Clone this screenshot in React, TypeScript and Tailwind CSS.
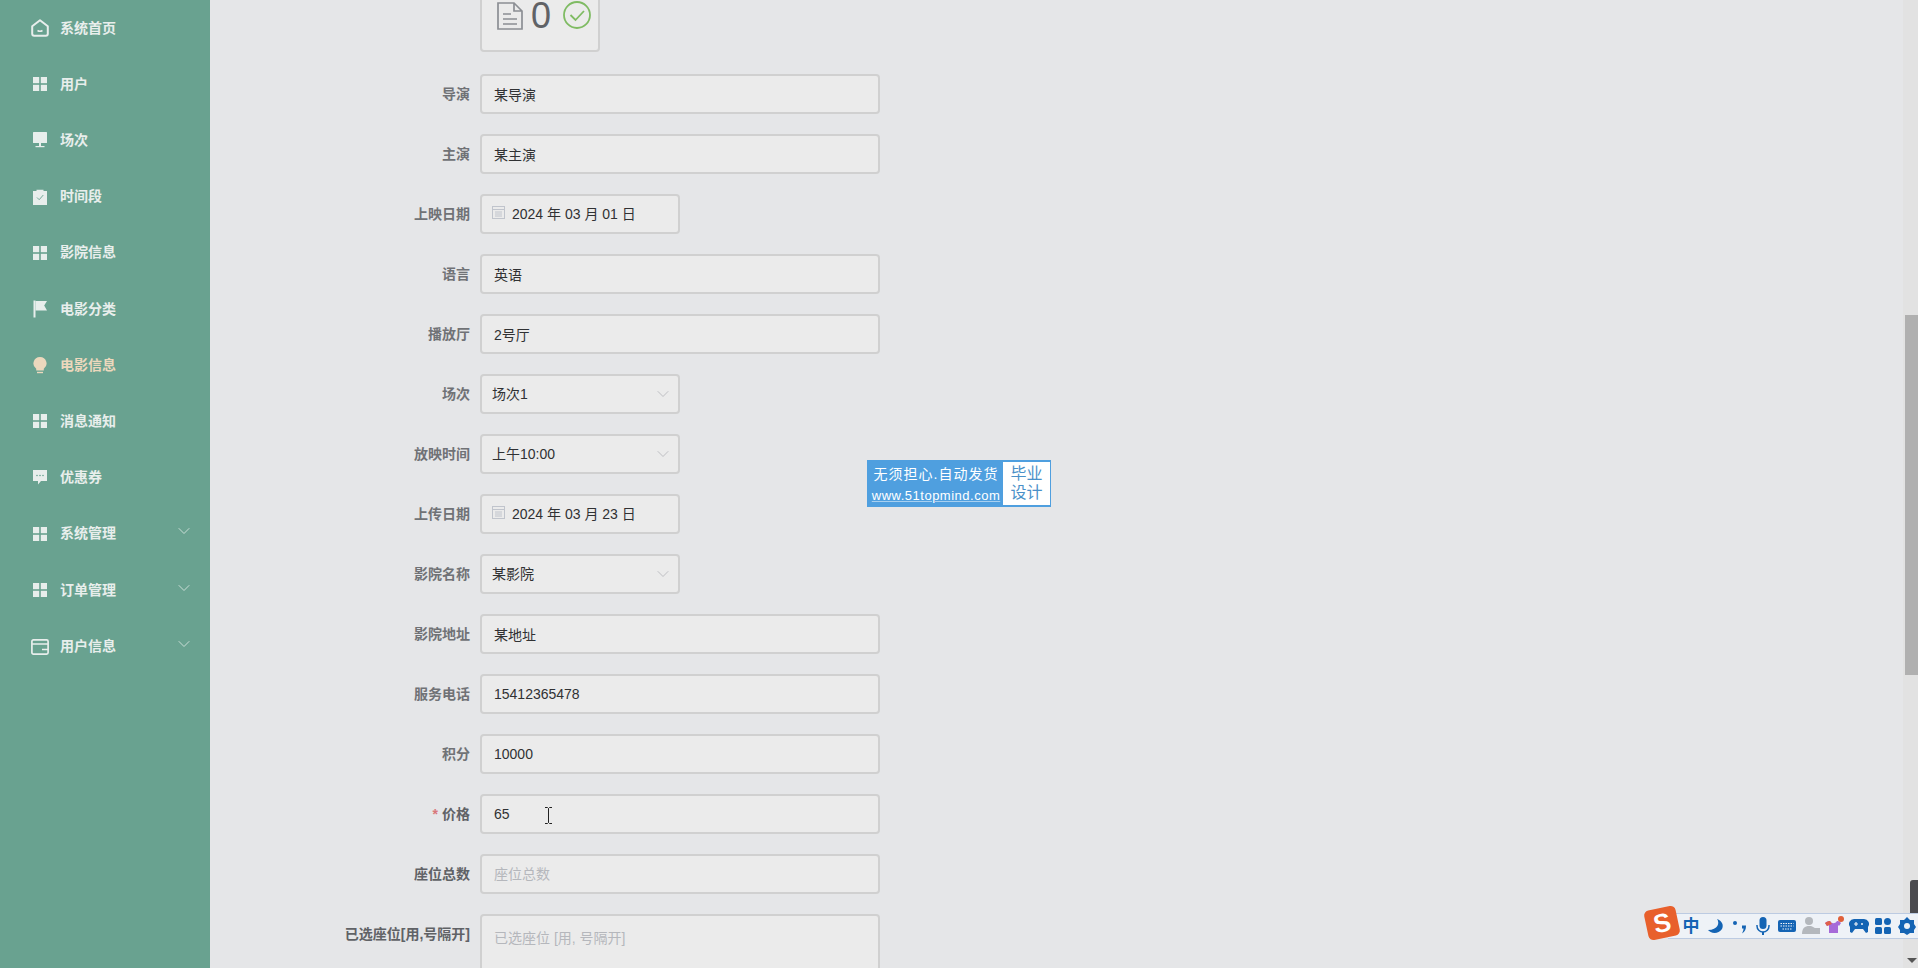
import type { ReactNode } from "react";
import { ChevronDown } from "lucide-react";

const Grid = () => (
  <svg width="14" height="14" viewBox="0 0 14 14" fill="currentColor">
    <rect x="0" y="0" width="6.2" height="6.2" />
    <rect x="7.8" y="0" width="6.2" height="6.2" />
    <rect x="0" y="7.8" width="6.2" height="6.2" />
    <rect x="7.8" y="7.8" width="6.2" height="6.2" />
  </svg>
);

const Home = () => (
  <svg width="18" height="18" viewBox="0 0 18 18" fill="none" stroke="currentColor" strokeWidth="2">
    <path d="M1.2 7.200 9 1.200l7.800 6v7.600a2 2 0 0 1-2 2H3.200a2 2 0 0 1-2-2z" strokeLinejoin="round" />
    <path d="M6.500 11.500q2.500 1.500 5 0" strokeWidth="1.500" />
  </svg>
);

const Monitor = () => (
  <svg width="14" height="16" viewBox="0 0 14 16" fill="currentColor">
    <rect x="0" y="0" width="14" height="11" rx="0.5" />
    <rect x="6" y="11" width="2" height="3" />
    <rect x="2.5" y="14" width="9" height="1.2" />
  </svg>
);

const Clip = () => (
  <svg width="14" height="16" viewBox="0 0 14 16">
    <path fill="currentColor" d="M0 2h3.5V.8h7V2H14v14H0z" />
    <path fill="none" stroke="#69a290" strokeWidth="0.9" d="m4 8.5 2.2 2.2L10.3 6" />
  </svg>
);

const Flag = () => (
  <svg width="14" height="18" viewBox="0 0 14 18" fill="currentColor">
    <rect x="0.5" y="0.5" width="2" height="17" />
    <path d="M2.5 1H14l-2.8 4.5L14 10.500H2.500z" />
  </svg>
);

const Bulb = () => (
  <svg width="14" height="17" viewBox="0 0 14 17" fill="currentColor">
    <path d="M7 0a6.500 6.500 0 0 1 3.800 11.800V13.500H3.200v-1.700A6.500 6.500 0 0 1 7 0z" />
    <rect x="4" y="14.800" width="6" height="1.400" />
  </svg>
);

const Chat = () => (
  <svg width="14" height="15" viewBox="0 0 14 15">
    <path fill="currentColor" d="M0 0h14v11H8l-3 3.500V11H0z" />
    <circle cx="4" cy="5.500" r="0.800" fill="#69a290" />
    <circle cx="7" cy="5.500" r="0.800" fill="#69a290" />
    <circle cx="10" cy="5.500" r="0.800" fill="#69a290" />
  </svg>
);

const Card = () => (
  <svg width="18" height="16" viewBox="0 0 18 16" fill="none" stroke="currentColor" strokeWidth="1.700">
    <rect x="0.900" y="0.900" width="16.200" height="14.200" rx="1.500" />
    <path d="M1 5h16M11 10.500h6" />
  </svg>
);

const menu: { label: string; icon: ReactNode; active?: boolean; arrow?: boolean }[] = [
  { label: "系统首页", icon: <Home /> },
  { label: "用户", icon: <Grid /> },
  { label: "场次", icon: <Monitor /> },
  { label: "时间段", icon: <Clip /> },
  { label: "影院信息", icon: <Grid /> },
  { label: "电影分类", icon: <Flag /> },
  { label: "电影信息", icon: <Bulb />, active: true },
  { label: "消息通知", icon: <Grid /> },
  { label: "优惠券", icon: <Chat /> },
  { label: "系统管理", icon: <Grid />, arrow: true },
  { label: "订单管理", icon: <Grid />, arrow: true },
  { label: "用户信息", icon: <Card />, arrow: true },
];

const CalendarIcon = () => (
  <svg width="13" height="13" viewBox="0 0 13 13" fill="none" stroke="#c0c4cc" strokeWidth="1">
    <rect x="0.500" y="0.500" width="12" height="12" />
    <path d="M0.500 3.500h12M3 6h7M3 8h7M3 10h7" />
  </svg>
);

function Row({ label, required, strong, tall, children }: { label: string; required?: boolean; strong?: boolean; tall?: boolean; children: ReactNode }) {
  return (
    <div className="flex mb-5">
      <label
        className={`w-[270px] pr-[10px] text-right text-[14px] font-bold leading-[40px] ${strong ? "text-[#606266]" : "text-[#707276]"} ${tall ? "" : "h-10"}`}
      >
        {required && <span className="text-[#d9777a] mr-1">*</span>}
        {label}
      </label>
      {children}
    </div>
  );
}

const boxCls =
  "h-10 bg-[#ebebeb] border-2 border-[#d0d0d0] rounded-[4px] text-[14px] text-[#303133] flex items-center";

function TextField({ value, placeholder }: { value?: string; placeholder?: string }) {
  return (
    <input
      readOnly
      value={value ?? ""}
      placeholder={placeholder}
      className={`${boxCls} w-[400px] px-3 outline-none placeholder:text-[#b5b7bc]`}
    />
  );
}

function DateField({ value }: { value: string }) {
  return (
    <div className={`${boxCls} w-[200px] pl-[10px] gap-[7px]`}>
      <span className="-mt-[4px] flex">
        <CalendarIcon />
      </span>
      <span>{value}</span>
    </div>
  );
}

function SelectField({ value }: { value: string }) {
  return (
    <div className={`${boxCls} w-[200px] pl-[10px] pr-[5px] justify-between`}>
      <span>{value}</span>
      <ChevronDown size={20} strokeWidth={1} className="text-[#b4b6bb]" />
    </div>
  );
}

function ImeBar() {
  return (
    <div className="absolute left-[1668px] top-[913px] w-[250px] h-[26px] bg-[#eef2f7] border-y border-[#bccbe2] flex items-center pl-[13px] gap-[4px] text-[#1464b4]">
      <span className="w-5 text-center text-[17px] font-bold leading-none">中</span>
      <svg width="20" height="20" viewBox="0 0 20 20" fill="currentColor">
        <path d="M12 3c3 4 1 11-9 11 2 3 10 5 14-1 2-4 0-8-5-10z" />
      </svg>
      <svg width="20" height="20" viewBox="0 0 20 20" fill="currentColor">
        <circle cx="6" cy="7" r="2" />
        <path d="M13 9.500h4c0 4-1 6-4 8 1-2 1.500-3.500 1.500-5H13z" />
      </svg>
      <svg width="20" height="20" viewBox="0 0 20 20" fill="currentColor">
        <rect x="6.500" y="1" width="7" height="12" rx="3.500" />
        <path d="M4 9v1a6 6 0 0 0 12 0V9" fill="none" stroke="currentColor" strokeWidth="1.500" />
        <rect x="9" y="16" width="2" height="3" />
      </svg>
      <svg width="20" height="20" viewBox="0 0 20 20">
        <rect x="1" y="4" width="18" height="12" rx="2" fill="currentColor" />
        <path d="M3.500 7.500h13M3.500 10h13M5.500 13h9" stroke="#eef2f7" strokeWidth="1.200" strokeDasharray="1.500 1" />
      </svg>
      <svg width="20" height="20" viewBox="0 0 20 20" fill="#b4b8bd">
        <circle cx="8" cy="5" r="4" />
        <path d="M1 18c0-6 3-8 7-8s6 2 6 3v5z" />
        <rect x="12" y="12" width="7" height="6" />
      </svg>
      <svg width="20" height="20" viewBox="0 0 20 20">
        <path d="M0 7c3-2 4-2 5-2 2 3 5 3 7 0 1 0 2 0 4 2l-2 3-1-1v8H4v-8l-2 1z" fill="#a66ad8" />
        <path d="M0 7c3-2 4-2 5-2l2 3-5 2z" fill="#e0604a" />
        <circle cx="16" cy="3" r="3" fill="#e0603a" />
      </svg>
      <svg width="20" height="20" viewBox="0 0 20 20" fill="currentColor">
        <path d="M5 3h10a5 5 0 0 1 4 8v5l-2 1-3-4H6l-3 4-2-1v-5a5 5 0 0 1 4-8z" />
        <path d="M5 8h4M7 6v4" stroke="#eef2f7" strokeWidth="1.200" />
        <circle cx="13" cy="8" r="1" fill="#eef2f7" />
      </svg>
      <svg width="20" height="20" viewBox="0 0 20 20" fill="currentColor">
        <rect x="2" y="2" width="7" height="7" rx="1.500" />
        <circle cx="14.500" cy="5.500" r="3.500" />
        <rect x="2" y="11" width="7" height="7" rx="1.500" />
        <rect x="11" y="11" width="7" height="7" rx="1.500" />
      </svg>
      <svg width="20" height="20" viewBox="0 0 20 20" fill="currentColor">
        <path d="M10 1l3 3h4v4l2 3-2 3v3h-4l-3 2-3-2H3v-3l-2-3 2-3V4h4z" />
        <circle cx="10" cy="10" r="3" fill="#eef2f7" />
      </svg>
    </div>
  );
}

export default function App() {
  return (
    <div className="relative flex h-[968px] overflow-hidden bg-[#e5e6e8] font-['Liberation_Sans','Noto_Sans_CJK_SC',sans-serif]">
      <aside className="w-[210px] shrink-0 bg-[#69a290]">
        {menu.map((m) => (
          <div
            key={m.label}
            className={`flex items-center text-[14px] font-bold ${m.arrow ? "h-[56.5px]" : "h-[56.2px]"} ${m.active ? "text-[#ecd8bd]" : "text-[#e8eeec]"}`}
          >
            <span className="w-[60px] flex justify-center pl-[20px]">{m.icon}</span>
            <span className="flex-1">{m.label}</span>
            {m.arrow && <ChevronDown size={20} strokeWidth={1.100} className="mr-[16px] -mt-[5px] text-[#d2e2dd]" />}
          </div>
        ))}
      </aside>

      <main className="flex-1 -mt-[68px]">
        <div className="flex mb-[22px]">
          <div className="w-[270px]" />
          <div className="w-[120px] h-[120px] bg-[#ebebeb] border-2 border-[#d0d0d0] rounded-[4px] flex items-end gap-[8px] pl-[15px] pb-[20px]">
            <svg width="26" height="28" viewBox="0 0 26 28" fill="none" stroke="#8c8f94" strokeWidth="1.700">
              <path d="M1 1h16l8 8v18H1zM17 1v8h8M6 12h8M6 17h14M6 22h14" />
            </svg>
            <span className="text-[36px] leading-[28px] text-[#606266]">0</span>
            <svg width="30" height="30" viewBox="0 0 30 30" fill="none" stroke="#7fbb63" strokeWidth="1.800" className="ml-[3px]">
              <circle cx="15" cy="15" r="13" />
              <path d="m8.500 15 5 5 8.500-9" />
            </svg>
          </div>
        </div>

        <Row label="导演"><TextField value="某导演" /></Row>
        <Row label="主演"><TextField value="某主演" /></Row>
        <Row label="上映日期"><DateField value="2024 年 03 月 01 日" /></Row>
        <Row label="语言"><TextField value="英语" /></Row>
        <Row label="播放厅"><TextField value="2号厅" /></Row>
        <Row label="场次"><SelectField value="场次1" /></Row>
        <Row label="放映时间"><SelectField value="上午10:00" /></Row>
        <Row label="上传日期"><DateField value="2024 年 03 月 23 日" /></Row>
        <Row label="影院名称"><SelectField value="某影院" /></Row>
        <Row label="影院地址"><TextField value="某地址" /></Row>
        <Row label="服务电话"><TextField value="15412365478" /></Row>
        <Row label="积分"><TextField value="10000" /></Row>
        <Row label="价格" required strong><TextField value="65" /></Row>
        <Row label="座位总数" strong><TextField placeholder="座位总数" /></Row>
        <Row label="已选座位[用,号隔开]" strong tall>
          <textarea
            readOnly
            placeholder="已选座位 [用, 号隔开]"
            className="w-[400px] h-[100px] bg-[#ebebeb] border-2 border-[#d0d0d0] rounded-[4px] text-[14px] px-3 py-[12px] outline-none resize-none placeholder:text-[#b5b7bc]"
          />
        </Row>
      </main>

      {/* watermark */}
      <div className="absolute left-[867px] top-[460px] w-[184px] h-[47px] bg-[#4f9fdf] flex p-[2px] pr-[1px]">
        <div className="w-[134px] pt-[2px] text-white text-center">
          <div className="text-[14px] leading-[21px] tracking-[1px] whitespace-nowrap">无须担心.自动发货</div>
          <div className="text-[13px] leading-[18px] mt-[2px] underline decoration-[#a8d0f0] tracking-[0.5px] whitespace-nowrap">www.51topmind.com</div>
        </div>
        <div className="flex-1 bg-white text-[#4a90c8] text-[16px] leading-[19px] text-center py-[2px]">
          毕业
          <br />
          设计
        </div>
      </div>

      {/* scrollbar */}
      <div className="absolute right-0 top-0 w-[15px] h-full bg-[#e2e2e2]">
        <div className="absolute right-0 top-[315px] w-[13px] h-[360px] bg-[#b0b0b0]" />
        <div className="absolute right-0 top-[880px] w-2 h-[34px] rounded-tl-[3px] bg-[#4a4a4e]" />
        <div className="absolute right-[1px] top-[958px] w-0 h-0 border-x-[5px] border-x-transparent border-t-[5px] border-t-[#555]" />
      </div>

      <ImeBar />
      <div className="absolute left-[1646px] top-[908px] w-[32px] h-[30px] bg-[#e8602c] rounded-[5px] -rotate-12 flex items-center justify-center text-white text-[26px] font-bold leading-none">
        S
      </div>

      {/* text cursor */}
      <svg className="absolute left-[544px] top-[807px]" width="9" height="17" viewBox="0 0 9 17" fill="none" stroke="#222" strokeWidth="1">
        <path d="M1 .5h2.500L4.500 1.500 5.500.5H8M4.500 1.500v14M1 16.500h2.500l1-1 1 1H8" />
      </svg>
    </div>
  );
}
